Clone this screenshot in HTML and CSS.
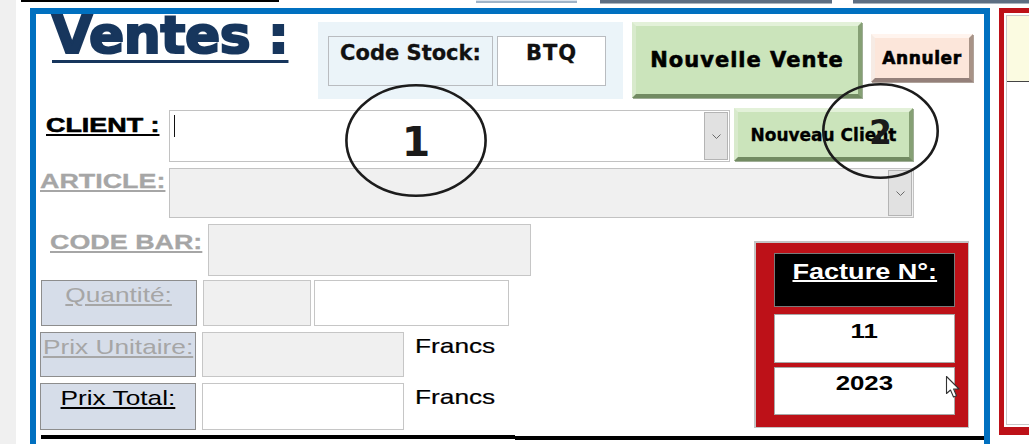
FILE: index.html
```html
<!DOCTYPE html>
<html lang="fr">
<head>
<meta charset="utf-8">
<title>Ventes</title>
<link rel="stylesheet" href="styles.css">
</head>
<body>
<div class="gutter"></div>
<div class="main">
  <div class="topbars">
    <div class="tb tb-black"></div>
    <div class="tb tb-light"></div>
    <div class="tb tb-dark tb-d1"></div>
    <div class="tb tb-dark tb-d2"></div>
  </div>
  <div class="workspace">
    <section class="frame">
      <div class="row row1">
        <div class="title-col"><h1 class="title">Ventes :</h1></div>
        <div class="stock-panel">
          <div class="stock-box stock-label">Code Stock:</div>
          <div class="stock-box stock-value">BTQ</div>
        </div>
        <button class="btn btn-green btn-new">Nouvelle Vente</button>
        <button class="btn btn-pink btn-cancel">Annuler</button>
      </div>

      <div class="row row2">
        <div class="lab-col lab-col-client"><span class="cap-label lab-client">CLIENT :</span></div>
        <div class="combo combo-client">
          <span class="caret"></span>
          <span class="drop"><svg width="9" height="5" viewBox="0 0 9 5"><polyline points="0.5,0.5 4.5,4.5 8.5,0.5" fill="none" stroke="#6a6a6a" stroke-width="1"/></svg></span>
        </div>
        <button class="btn btn-green btn-client">Nouveau Client</button>
      </div>

      <div class="row row3">
        <div class="lab-col lab-col-article"><span class="cap-label lab-article">ARTICLE:</span></div>
        <div class="combo combo-article">
          <span class="drop"><svg width="9" height="5" viewBox="0 0 9 5"><polyline points="0.5,0.5 4.5,4.5 8.5,0.5" fill="none" stroke="#6a6a6a" stroke-width="1"/></svg></span>
        </div>
      </div>

      <div class="lower">
        <div class="left-col">
          <div class="row row-codebar">
            <div class="lab-col lab-col-wide"><span class="cap-label lab-codebar">CODE BAR:</span></div>
            <div class="input input-off in-codebar"></div>
          </div>
          <div class="row row-qty">
            <div class="field-label fl-qty"><span class="txt txt-u muted">Quantité:</span></div>
            <div class="input input-off in-q1"></div>
            <div class="input in-q2"></div>
          </div>
          <div class="row row-pu">
            <div class="field-label fl-pu"><span class="txt txt-u muted">Prix Unitaire:</span></div>
            <div class="input input-off in-pu"></div>
            <span class="txt francs">Francs</span>
          </div>
          <div class="row row-pt">
            <div class="field-label fl-pt"><span class="txt txt-u">Prix Total:</span></div>
            <div class="input in-pu"></div>
            <span class="txt francs">Francs</span>
          </div>
        </div>
        <div class="facture">
          <div class="fac-head"><span class="fac-text fac-title">Facture N°:</span></div>
          <div class="fac-cell fac-num"><span class="fac-text">11</span></div>
          <div class="fac-cell fac-year"><span class="fac-text">2023</span></div>
        </div>
      </div>

      <div class="bottom-line">
        <div class="bl-left"></div>
        <div class="bl-right"></div>
      </div>

      <div class="mark mark-1">
        <svg width="142" height="113" viewBox="0 0 142 113"><ellipse cx="71" cy="56.5" rx="69.6" ry="55.2" fill="none" stroke="#1c1c1c" stroke-width="2.6"/></svg>
        <span class="mark-num">1</span>
      </div>
      <div class="mark mark-2">
        <svg width="117" height="96" viewBox="0 0 117 96"><ellipse cx="58.5" cy="48" rx="57.2" ry="46.7" fill="none" stroke="#1c1c1c" stroke-width="2.6"/></svg>
        <span class="mark-num">2</span>
      </div>
      <svg class="cursor" width="19" height="24" viewBox="0 0 19 24"><path d="M1.5 1.5 L1.5 18.5 L5.5 15 L8.5 22 L11.5 20.7 L8.6 14 L14 14 Z" fill="#fff" stroke="#333" stroke-width="1.1" stroke-linejoin="round"/></svg>
    </section>

    <aside class="side">
      <div class="side-inner">
        <div class="side-head"></div>
      </div>
    </aside>
  </div>
</div>
</body>
</html>
```

FILE: styles.css
```css
* { box-sizing: border-box; }
html, body { margin: 0; padding: 0; }
body {
  width: 1029px;
  height: 444px;
  overflow: hidden;
  display: flex;
  background: #fff;
  font-family: "Liberation Sans", Arial, sans-serif;
  color: #000;
}
.gutter { width: 16px; flex: none; background: #f0f0f0; }
.main { flex: 1; display: flex; flex-direction: column; min-width: 0; }

/* top strip */
.topbars { height: 8px; display: flex; align-items: flex-start; flex: none; }
.tb { flex: none; }
.tb-black { margin-left: 5px; width: 258px; height: 2px; background: #000; }
.tb-light { margin-left: 197px; width: 101px; height: 3px; background: #dde5ee; border-bottom: 2px solid #9fb3c7; }
.tb-dark { height: 4px; background: #5d6e82; border-bottom: 1px solid #aab4bf; }
.tb-d1 { margin-left: 23px; width: 232px; }
.tb-d2 { margin-left: 21px; flex: 1; }

.workspace { display: flex; align-items: flex-start; flex: none; }

/* main blue frame */
.frame {
  position: relative;
  margin-left: 14px;
  width: 960px;
  height: 450px;
  flex: none;
  border: 6px solid #0070c0;
  border-bottom: none;
  display: flex;
  flex-direction: column;
}
.row { display: flex; align-items: flex-start; flex: none; }
.row1 { height: 94px; }
.title-col { width: 282px; flex: none; padding-left: 16px; }
.title {
  margin: -5px 0 0;
  font-family: "DejaVu Sans", Verdana, sans-serif;
  font-weight: bold;
  font-size: 52px;
  line-height: 53px;
  letter-spacing: -0.4px;
  color: #17365d;
  -webkit-text-stroke: 2.2px #17365d;
  text-decoration: underline;
  text-decoration-thickness: 3px;
  text-underline-offset: 7px;
  white-space: nowrap;
}

.stock-panel {
  flex: none;
  width: 305px;
  height: 77px;
  margin-top: 8px;
  background: #ebf4f9;
  padding: 14px 0 0 10px;
  display: flex;
  align-items: flex-start;
  gap: 4px;
}
.stock-box {
  height: 50px;
  border: 1px solid #b9bcc0;
  padding-top: 6px;
  text-align: center;
  font-family: "DejaVu Sans", Verdana, sans-serif;
  font-weight: bold;
  font-size: 21px;
  line-height: 21px;
  color: #111;
  -webkit-text-stroke: 0.3px #111;
  white-space: nowrap;
}
.stock-label { width: 165px; background: #ebf4f9; }
.stock-value { width: 109px; background: #fff; letter-spacing: 1px; }

/* beveled buttons */
.btn {
  flex: none;
  display: flex;
  align-items: center;
  justify-content: center;
  padding: 0;
  margin: 0;
  font-family: "DejaVu Sans", Verdana, sans-serif;
  font-weight: bold;
  line-height: normal;
  color: #000;
  -webkit-text-stroke: 0.6px #000;
  border-style: solid;
  border-width: 4px;
  white-space: nowrap;
}
.btn-green {
  background: #cbe4bb;
  border-color: #e3f1d9 #86a075 #728b62 #d8eacc;
  box-shadow: 1px 1px 0 #9fae96;
}
.btn-pink {
  background: #fce6da;
  border-color: #fff4ee #a89387 #94807a #f6ebe4;
  box-shadow: 1px 1px 0 #b0a39b;
}
.btn-new { margin: 8px 0 0 9px; width: 230px; height: 76px; font-size: 21px; letter-spacing: 1px; }
.btn-cancel { margin: 20px 0 0 9px; width: 102px; height: 48px; font-size: 17px; letter-spacing: 0.6px; }
.btn-client { margin: 0 0 0 4px; width: 179px; height: 53px; font-size: 17px; -webkit-text-stroke: 0.3px #000; }

/* labels */
.lab-col { flex: none; }
.lab-col-client { width: 133px; padding-left: 10px; }
.lab-col-article { width: 133px; padding-left: 4px; }
.lab-col-wide { width: 172px; padding-left: 14px; }
.cap-label {
  display: inline-block;
  font-weight: bold;
  font-size: 21px;
  line-height: 21px;
  text-decoration: underline;
  text-decoration-thickness: 2px;
  text-underline-offset: 2px;
  transform: scaleX(1.28);
  transform-origin: left center;
  white-space: nowrap;
}
.lab-client { color: #000; margin-top: 6px; -webkit-text-stroke: 0.6px #000; }
.lab-article { color: #a6a6a6; margin-top: 2px; -webkit-text-stroke: 0.3px #a6a6a6; }
.lab-codebar { color: #a6a6a6; margin-top: 7px; -webkit-text-stroke: 0.3px #a6a6a6; }

/* combos */
.row2 { height: 54px; }
.row3 { margin-top: 6px; height: 50px; }
.combo { flex: none; display: flex; border: 1px solid #c2c2c2; }
.combo-client { margin-top: 2px; width: 561px; height: 52px; background: #fff; }
.combo-article { width: 745px; height: 50px; background: #f0f0f0; }
.caret { flex: none; width: 1px; height: 22px; margin: 4px 0 0 4px; background: #111; }
.drop {
  flex: none;
  margin: 1px 1px 1px auto;
  width: 24px;
  background: #e1e1e1;
  border: 1px solid #b4b4b4;
  display: flex;
  align-items: center;
  justify-content: center;
}

/* lower part */
.lower { display: flex; align-items: flex-start; flex: none; }
.left-col { width: 500px; flex: none; display: flex; flex-direction: column; }
.row-codebar { margin-top: 6px; height: 52px; }
.row-qty { margin-top: 4px; height: 46px; }
.row-pu { margin-top: 6px; height: 45px; }
.row-pt { margin-top: 6px; height: 47px; }
.input { flex: none; align-self: stretch; border: 1px solid #c6c6c6; background: #fff; }
.input-off { background: #f0f0f0; }
.in-codebar { width: 323px; }
.in-q1 { margin-left: 6px; width: 108px; }
.in-q2 { margin-left: 3px; width: 195px; }
.in-pu { margin-left: 6px; width: 202px; }
.field-label {
  flex: none;
  align-self: stretch;
  width: 156px;
  background: #d6dde9;
  border: 1px solid #8d8d8d;
  padding-top: 3px;
  text-align: center;
}
.fl-qty { margin-left: 5px; }
.fl-pu, .fl-pt { margin-left: 4px; }
.txt {
  display: inline-block;
  font-size: 21px;
  line-height: 21px;
  transform: scaleX(1.25);
  white-space: nowrap;
}
.txt-u { text-decoration: underline; }
.muted { color: #a6a6a6; }
.francs { flex: none; margin: 3px 0 0 11px; transform-origin: left center; -webkit-text-stroke: 0.2px #000; }

/* facture */
.facture {
  flex: none;
  margin: 23px 0 0 218px;
  width: 215px;
  height: 187px;
  border: 2px solid #c4c4c4;
  border-right-width: 1px;
  border-bottom-width: 1px;
  background: #bd1118;
  padding: 10px 13px 12px 18px;
  display: flex;
  flex-direction: column;
}
.fac-head { flex: none; height: 54px; background: #000; border: 1px solid #7a7a7a; text-align: center; padding-top: 7px; }
.fac-cell { flex: none; background: #fff; border: 1px solid #a8a8a8; text-align: center; }
.fac-num { margin-top: 7px; height: 49px; padding-top: 5px; }
.fac-year { margin-top: 4px; height: 48px; padding-top: 4px; }
.fac-text {
  display: inline-block;
  font-weight: bold;
  font-size: 21px;
  line-height: 21px;
  transform: scaleX(1.23);
  white-space: nowrap;
}
.fac-title {
  font-size: 22px;
  line-height: 22px;
  color: #fff;
  text-decoration: underline;
  text-decoration-thickness: 2px;
}

/* bottom rule */
.bottom-line { display: flex; align-items: flex-start; margin-top: 5px; flex: none; }
.bl-left { flex: none; margin-left: 5px; width: 474px; height: 4px; background: #000; }
.bl-right { flex: 1; margin-top: 1px; height: 4px; background: #000; }

/* annotation overlays */
.mark { position: absolute; display: flex; align-items: center; justify-content: center; }
.mark svg { position: absolute; left: 0; top: 0; }
.mark-1 { left: 309px; top: 70px; width: 142px; height: 113px; }
.mark-2 { left: 786px; top: 69px; width: 117px; height: 96px; }
.mark-num {
  position: relative;
  font-family: "DejaVu Sans", Verdana, sans-serif;
  font-weight: bold;
  color: #1a1a1a;
  line-height: 1;
}
.mark-1 .mark-num { font-size: 41px; margin-top: 4px; }
.mark-2 .mark-num { font-size: 33px; margin-top: 3px; }
.cursor { position: absolute; left: 909px; top: 361px; }

/* right red panel */
.side {
  flex: none;
  margin-left: 9px;
  width: 60px;
  height: 427px;
  border: 5px solid #bd1118;
  border-right: none;
  border-bottom-width: 8px;
  padding: 2px 0 2px 2px;
}
.side-inner { height: 100%; border: 1px solid #c8c8c8; border-right: none; display: flex; flex-direction: column; }
.side-head { flex: none; height: 66px; background: #fbfbe1; border-bottom: 1px solid #444; }
```
